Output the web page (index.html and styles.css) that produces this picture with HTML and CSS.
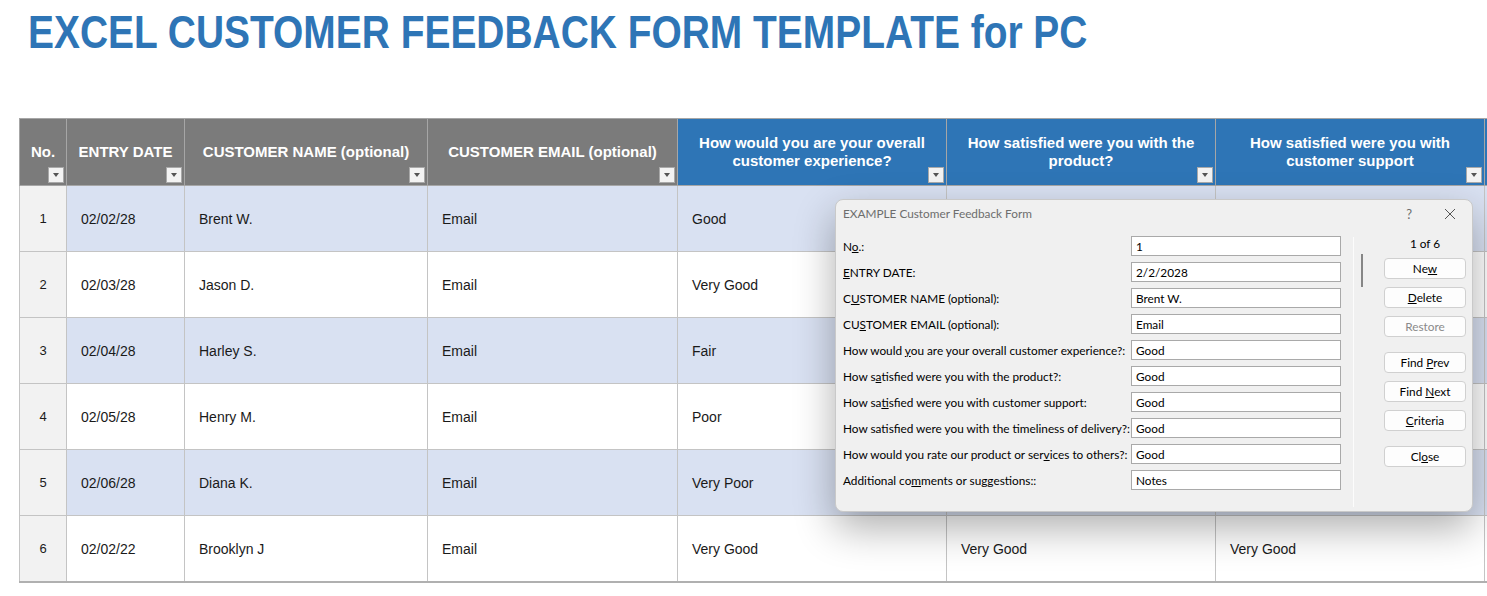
FILE: index.html
```html
<!DOCTYPE html>
<html lang="en">
<head>
    <meta charset="UTF-8">
    <meta name="viewport" content="width=device-width, initial-scale=1.0">
    <title>Excel Customer Feedback Form Template for PC</title>
    <link rel="stylesheet" href="styles.css">
</head>
<body>

    <h1 class="title">EXCEL CUSTOMER FEEDBACK FORM TEMPLATE for PC</h1>

    <div class="sheet">
        <table class="feedback">
            <colgroup>
                <col class="c-no">
                <col class="c-date">
                <col class="c-name">
                <col class="c-email">
                <col class="c-q">
                <col class="c-q">
                <col class="c-q">
                <col class="c-q">
            </colgroup>
            <thead>
                <tr>
                    <th class="gray">No.<span class="filter"></span></th>
                    <th class="gray">ENTRY DATE<span class="filter"></span></th>
                    <th class="gray">CUSTOMER NAME (optional)<span class="filter"></span></th>
                    <th class="gray">CUSTOMER EMAIL (optional)<span class="filter"></span></th>
                    <th class="blue">How would you are your overall customer experience?<span class="filter"></span></th>
                    <th class="blue">How satisfied were you with the product?<span class="filter"></span></th>
                    <th class="blue">How satisfied were you with customer support<span class="filter"></span></th>
                    <th class="blue"></th>
                </tr>
            </thead>
            <tbody>
                <!-- answers to the last questions sit under the data form -->
                <tr class="band">
                    <td class="num">1</td><td>02/02/28</td><td>Brent W.</td><td>Email</td><td>Good</td><td></td><td></td><td></td>
                </tr>
                <tr>
                    <td class="num">2</td><td>02/03/28</td><td>Jason D.</td><td>Email</td><td>Very Good</td><td></td><td></td><td></td>
                </tr>
                <tr class="band">
                    <td class="num">3</td><td>02/04/28</td><td>Harley S.</td><td>Email</td><td>Fair</td><td></td><td></td><td></td>
                </tr>
                <tr>
                    <td class="num">4</td><td>02/05/28</td><td>Henry M.</td><td>Email</td><td>Poor</td><td></td><td></td><td></td>
                </tr>
                <tr class="band">
                    <td class="num">5</td><td>02/06/28</td><td>Diana K.</td><td>Email</td><td>Very Poor</td><td></td><td></td><td></td>
                </tr>
                <tr>
                    <td class="num">6</td><td>02/02/22</td><td>Brooklyn J</td><td>Email</td><td>Very Good</td><td>Very Good</td><td>Very Good</td><td></td>
                </tr>
            </tbody>
        </table>
    </div>

    <!-- Data form window over the sheet -->
    <div class="dialog">
        <div class="dialog-bar">
            <span class="dialog-title">EXAMPLE Customer Feedback Form</span>
            <span class="bar-help">?</span>
            <span class="bar-close">
                <svg width="12" height="12" viewBox="0 0 12 12"><path d="M1 1 L11 11 M11 1 L1 11" stroke="#555" stroke-width="1" fill="none"/></svg>
            </span>
        </div>
        <div class="dialog-body">
            <div class="fields">
                <div class="field"><label>N<u>o</u>.:</label><input type="text" value="1" readonly></div>
                <div class="field"><label><u>E</u>NTRY DATE:</label><input type="text" value="2/2/2028" readonly></div>
                <div class="field"><label>C<u>U</u>STOMER NAME (optional):</label><input type="text" value="Brent W." readonly></div>
                <div class="field"><label>CU<u>S</u>TOMER EMAIL (optional):</label><input type="text" value="Email" readonly></div>
                <div class="field"><label>How would <u>y</u>ou are your overall customer experience?:</label><input type="text" value="Good" readonly></div>
                <div class="field"><label>How s<u>a</u>tisfied were you with the product?:</label><input type="text" value="Good" readonly></div>
                <div class="field"><label>How sa<u>t</u>isfied were you with customer support:</label><input type="text" value="Good" readonly></div>
                <div class="field"><label>How sat<u>i</u>sfied were you with the timeliness of delivery?:</label><input type="text" value="Good" readonly></div>
                <div class="field"><label>How would you rate our product or ser<u>v</u>ices to others?:</label><input type="text" value="Good" readonly></div>
                <div class="field"><label>Additional co<u>m</u>ments or suggestions::</label><input type="text" value="Notes" readonly></div>
            </div>
            <div class="side">
                <div class="thumb"></div>
                <div class="actions">
                    <div class="counter">1 of 6</div>
                    <button>Ne<u>w</u></button>
                    <button><u>D</u>elete</button>
                    <button class="disabled">Restore</button>
                    <button class="spaced">Find <u>P</u>rev</button>
                    <button>Find <u>N</u>ext</button>
                    <button><u>C</u>riteria</button>
                    <button class="spaced">Cl<u>o</u>se</button>
                </div>
            </div>
        </div>
    </div>

</body>
</html>
```

FILE: styles.css
```css
body {
    margin: 0;
    padding: 0;
    background-color: #fff;
    font-family: "Liberation Sans", Arial, sans-serif;
    overflow: hidden;
    width: 1487px;
    height: 596px;
    position: relative;
}

.title {
    margin: 0;
    padding: 9px 0 0 28px;
    font-size: 46px;
    line-height: 46px;
    font-weight: bold;
    color: #2e75b6;
    white-space: nowrap;
    transform: scaleX(0.846);
    transform-origin: 28px 0;
}

.sheet {
    margin-top: 63px;
    padding-left: 19px;
}

.feedback {
    border-collapse: collapse;
    table-layout: fixed;
    width: 1734px;
}

.c-no { width: 47px; }
.c-date { width: 118px; }
.c-name { width: 243px; }
.c-email { width: 250px; }
.c-q { width: 269px; }

.feedback th {
    position: relative;
    height: 66px;
    padding: 0 8px;
    color: #fff;
    font-size: 15px;
    line-height: 18px;
    font-weight: bold;
    text-align: center;
    border: 1px solid #a6a6a6;
}

.feedback th.gray {
    background-color: #7b7b7b;
}

.feedback th.blue {
    background-color: #2e75b6;
}

.filter {
    position: absolute;
    right: 2px;
    bottom: 2px;
    width: 14px;
    height: 14px;
    background-color: #f3f3f3;
    border: 1px solid #a9a9a9;
}

.filter::after {
    content: "";
    position: absolute;
    left: 4px;
    top: 5px;
    border-left: 3px solid transparent;
    border-right: 3px solid transparent;
    border-top: 4px solid #555;
}

.feedback td {
    height: 65px;
    padding: 0 0 0 14px;
    font-size: 14px;
    color: #1a1a1a;
    border: 1px solid #c4c4c4;
    white-space: nowrap;
    overflow: hidden;
}

.feedback tr.band td {
    background-color: #d9e1f2;
}

.feedback td.num,
.feedback tr.band td.num {
    padding: 0;
    text-align: center;
    font-size: 13px;
    background-color: #f2f2f2;
}

.feedback tbody tr:last-child td {
    border-bottom: 2px solid #b0b0b0;
}

/* data form */

.dialog {
    position: absolute;
    left: 835px;
    top: 199px;
    width: 636px;
    height: 311px;
    background-color: #f0f0f0;
    border: 1px solid #c9c9c9;
    border-radius: 8px;
    box-shadow: 0 16px 40px rgba(0, 0, 0, 0.32);
    font-family: Lato, "Noto Sans", sans-serif;
    font-size: 11.8px;
    color: #000;
    display: flex;
    flex-direction: column;
}

.dialog-bar {
    height: 30px;
    box-sizing: border-box;
    display: flex;
    align-items: center;
    padding: 0 16px 3px 7px;
}

.dialog-title {
    flex: 1;
    color: #6d6d6d;
}

.bar-help {
    color: #6d6d6d;
    font-size: 13px;
    margin-right: 32px;
}

.bar-close {
    display: flex;
}

.dialog-body {
    flex: 1;
    display: flex;
}

.fields {
    width: 517px;
    box-sizing: border-box;
    padding: 6px 12px 0 7px;
    display: flex;
    flex-direction: column;
    gap: 6px;
}

.field {
    display: flex;
    align-items: center;
    height: 20px;
}

.field label {
    width: 288px;
    flex-shrink: 0;
    white-space: nowrap;
}

.field input {
    width: 210px;
    height: 20px;
    box-sizing: border-box;
    margin: 0;
    padding: 0 4px;
    border: 1px solid #a9a9a9;
    background-color: #fff;
    font-family: inherit;
    font-size: 11.8px;
    color: #000;
    outline: none;
}

.side {
    flex: 1;
    display: flex;
    margin: 7px 0 4px;
    border-left: 1px solid #fcfcfc;
}

.thumb {
    width: 2px;
    height: 33px;
    margin: 17px 0 0 7px;
    background-color: #868686;
}

.actions {
    width: 82px;
    margin-left: 21px;
    display: flex;
    flex-direction: column;
    gap: 8px;
}

.counter {
    height: 14px;
    line-height: 14px;
    text-align: center;
    margin-bottom: -1px;
}

.actions button {
    height: 21px;
    padding: 0;
    background-color: #fdfdfd;
    border: 1px solid #d0d0d0;
    border-radius: 4px;
    font-family: inherit;
    font-size: 11.8px;
    color: #000;
}

.actions button.disabled {
    color: #8a8a8a;
}

.actions button.spaced {
    margin-top: 7px;
}
```
